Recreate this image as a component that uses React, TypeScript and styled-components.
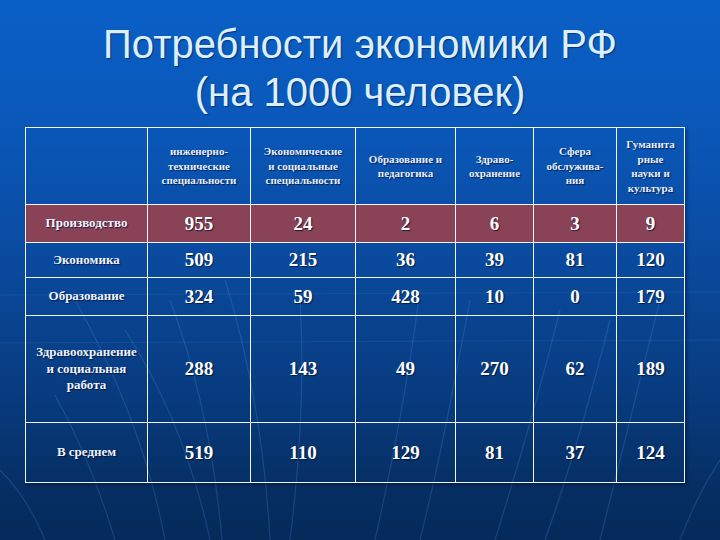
import React from 'react';
import styled, { createGlobalStyle } from 'styled-components';

const GlobalStyle = createGlobalStyle`
  html, body {
    margin: 0;
    padding: 0;
  }
  body {
    width: 720px;
    height: 540px;
    overflow: hidden;
  }
`;

const headers: React.ReactNode[] = [
  <>инженерно-<br />технические<br />специальности</>,
  <>Экономические<br />и социальные<br />специальности</>,
  <>Образование и<br />педагогика</>,
  <>Здраво-<br />охранение</>,
  <>Сфера<br />обслужива-<br />ния</>,
  <>Гуманита<br />рные<br />науки и<br />культура</>,
];

type Row = { label: React.ReactNode; values: number[]; height: number; accent?: boolean };

const rows: Row[] = [
  { label: 'Производство', values: [955, 24, 2, 6, 3, 9], height: 38, accent: true },
  { label: 'Экономика', values: [509, 215, 36, 39, 81, 120], height: 35 },
  { label: 'Образование', values: [324, 59, 428, 10, 0, 179], height: 38 },
  {
    label: <>Здравоохранение<br />и социальная<br />работа</>,
    values: [288, 143, 49, 270, 62, 189],
    height: 107,
  },
  { label: 'В среднем', values: [519, 110, 129, 81, 37, 124], height: 60 },
];

const colWidths = [122, 103, 105, 100, 78, 83, 68];

// фоновые линии слайда
const Streaks = () => (
  <Backdrop viewBox="0 0 720 540" preserveAspectRatio="none">
    <g fill="none" stroke="#6fa8ff" strokeWidth="1.3" strokeOpacity="0.18">
      <path d="M0 295 L720 292" strokeOpacity="0.1" />
      <path d="M0 343 L720 340" strokeOpacity="0.1" />
      <path d="M0 470 C 20 490, 35 515, 45 540" />
      <path d="M55 395 C 80 440, 100 490, 115 540" />
      <path d="M75 300 C 120 380, 150 460, 165 540" />
      <path d="M125 330 C 170 400, 195 470, 210 540" />
      <path d="M170 300 C 200 380, 215 460, 222 540" />
      <path d="M225 280 C 250 360, 265 450, 270 540" />
      <path d="M300 300 C 305 380, 300 460, 290 540" />
      <path d="M420 290 C 410 370, 395 450, 375 540" />
      <path d="M470 300 C 455 380, 440 460, 420 540" />
      <path d="M560 310 C 540 390, 520 460, 495 540" />
      <path d="M610 320 C 590 400, 570 470, 545 540" />
      <path d="M660 300 C 640 380, 620 460, 600 540" />
      <path d="M720 460 C 700 490, 690 515, 680 540" />
    </g>
  </Backdrop>
);

const App = () => (
  <>
    <GlobalStyle />
    <Slide>
      <Streaks />
      <Title>
        Потребности экономики РФ
        <br />
        (на 1000 человек)
      </Title>
      <Table>
        <colgroup>
          {colWidths.map((w, i) => (
            <col key={i} style={{ width: w }} />
          ))}
        </colgroup>
        <thead>
          <tr>
            <HeadCell />
            {headers.map((h, i) => (
              <HeadCell key={i}>{h}</HeadCell>
            ))}
          </tr>
        </thead>
        <tbody>
          {rows.map((r, i) => (
            <BodyRow key={i} $accent={r.accent} style={{ height: r.height }}>
              <LabelCell>{r.label}</LabelCell>
              {r.values.map((v, j) => (
                <NumCell key={j}>{v}</NumCell>
              ))}
            </BodyRow>
          ))}
        </tbody>
      </Table>
    </Slide>
  </>
);

export default App;

const Slide = styled.div`
  position: relative;
  width: 720px;
  height: 540px;
  overflow: hidden;
  box-sizing: border-box;
  padding: 20px 0 0 25px;
  background: linear-gradient(180deg, #0a5fc6 0%, #0a58ba 22%, #0a4ca2 45%, #083c80 72%, #062f64 90%, #052a5a 100%);
`;

const Backdrop = styled.svg`
  position: absolute;
  inset: 0;
  width: 720px;
  height: 540px;
  pointer-events: none;
`;

const Title = styled.h1`
  position: relative;
  margin: 0 0 11px -25px;
  width: 720px;
  font-family: 'Liberation Sans', Arial, sans-serif;
  font-weight: 400;
  font-size: 40px;
  line-height: 48px;
  text-align: center;
  color: #dcefff;
  text-shadow: 1px 1px 1px rgba(0, 20, 60, 0.55);
`;

const Table = styled.table`
  position: relative;
  width: 659px;
  table-layout: fixed;
  border-collapse: collapse;
  box-shadow: 2px 2px 3px rgba(0, 10, 40, 0.45);
  font-family: 'Liberation Serif', 'Times New Roman', serif;
  font-weight: 700;
  color: #ffffff;
  text-align: center;

  td,
  th {
    border: 1px solid #eef6ff;
    padding: 0 2px;
    vertical-align: middle;
    text-shadow: 1px 1px 1px rgba(0, 10, 40, 0.7);
  }
`;

const HeadCell = styled.th`
  height: 76px;
  font-size: 11px;
  line-height: 14.5px;
  font-weight: 700;
  color: #e6f0ff;
`;

const BodyRow = styled.tr<{ $accent?: boolean }>`
  background: ${(p) => (p.$accent ? '#8a4256' : 'transparent')};
`;

const LabelCell = styled.td`
  font-size: 13px;
  line-height: 16.5px;
  color: #eef4ff;
`;

const NumCell = styled.td`
  font-size: 19px;
  line-height: 20px;
`;
